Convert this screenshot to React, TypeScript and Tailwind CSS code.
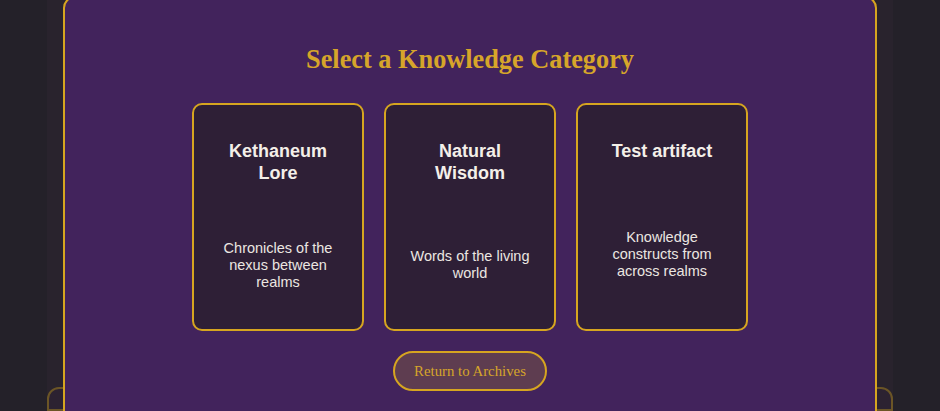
import React from "react";

const categories = [
  { title: "Kethaneum Lore", desc: "Chronicles of the nexus between realms" },
  { title: "Natural Wisdom", desc: "Words of the living world" },
  { title: "Test artifact", desc: "Knowledge constructs from across realms" },
];

export default function App() {
  return (
    <div className="relative h-[411px] w-full overflow-hidden bg-[#242129]">
      {/* page behind the modal */}
      <div className="mx-auto flex h-full w-[846px] flex-col bg-[#29232d] pt-[387px]">
        <div className="h-[120px] rounded-t-xl border-2 border-[#6b5526] bg-[#2c2231]" />
      </div>

      {/* modal */}
      <div className="absolute left-[63px] top-[-4px] flex h-[460px] w-[814px] flex-col items-center rounded-xl border-2 border-[#d6a520] bg-[#42235c] pt-[47px]">
        <h2
          className="text-[26.3px] font-bold leading-[1.15] text-[#d6a52a]"
          style={{ fontFamily: '"Liberation Serif", "Times New Roman", serif' }}
        >
          Select a Knowledge Category
        </h2>

        <div
          className="mt-[28px] flex gap-5"
          style={{ fontFamily: '"Liberation Sans", Arial, sans-serif' }}
        >
          {categories.map((c) => (
            <div
              key={c.title}
              className="flex h-[228px] w-[172px] flex-col rounded-[10px] border-2 border-[#d6a520] bg-[#2e1f36] px-5 pb-[19px] pt-[36px] text-center"
            >
              <h3 className="text-[18px] font-bold leading-[1.2] text-[#f4efe9]">{c.title}</h3>
              <div className="mt-[36px] flex flex-1 items-center justify-center">
                <p className="text-[14.5px] leading-[17px] text-[#ebe6e1]">{c.desc}</p>
              </div>
            </div>
          ))}
        </div>

        <button
          className="mt-5 flex h-[40px] items-center rounded-full border-2 border-[#d6a520] bg-[#5e3d50] px-[19px] text-[14.8px] text-[#d6a52a]"
          style={{ fontFamily: '"Liberation Serif", "Times New Roman", serif' }}
        >
          Return to Archives
        </button>
      </div>
    </div>
  );
}
